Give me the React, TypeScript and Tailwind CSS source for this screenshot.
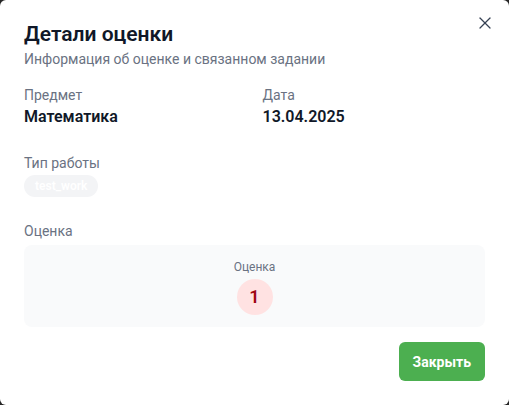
import { X } from "lucide-react";

export default function App() {
    return (
        <div className="h-[405px] w-[509px] bg-neutral-800" style={{ fontFamily: 'Roboto, "Noto Sans", sans-serif' }}>
            <div className="relative flex h-full w-full flex-col rounded-[6px] bg-white px-6 pt-5 pb-6">
                <button className="absolute right-[14px] top-[13px] text-gray-700">
                    <X size={20} strokeWidth={1.5} />
                </button>
                <h2 className="text-[21px] font-semibold leading-7 text-gray-900">Детали оценки</h2>
                <p className="mt-px text-sm leading-5 text-gray-500">Информация об оценке и связанном задании</p>

                <div className="mt-4 grid grid-cols-2 gap-4">
                    <div>
                        <div className="text-sm leading-5 text-gray-500">Предмет</div>
                        <div className="text-base font-semibold leading-6 text-gray-900">Математика</div>
                    </div>
                    <div>
                        <div className="text-sm leading-5 text-gray-500">Дата</div>
                        <div className="text-base font-semibold leading-6 text-gray-900">13.04.2025</div>
                    </div>
                </div>

                <div className="mt-6">
                    <div className="text-sm leading-5 text-gray-500">Тип работы</div>
                    <span className="mt-0.5 inline-flex h-[22px] items-center rounded-full bg-gray-100 px-[11px] text-xs font-semibold text-white">
                        test_work
                    </span>
                </div>

                <div className="mt-6">
                    <div className="text-sm leading-5 text-gray-500">Оценка</div>
                    <div className="mt-1 flex flex-col items-center rounded-lg bg-gray-50 pt-3.5 pb-3">
                        <div className="text-xs leading-4 text-gray-500">Оценка</div>
                        <div className="mt-1 flex h-9 w-9 items-center justify-center rounded-full bg-red-100 text-lg font-semibold text-red-800">
                            1
                        </div>
                    </div>
                </div>

                <div className="mt-auto flex justify-end">
                    <button className="h-[39px] rounded-md bg-[#4caf50] px-[14px] text-sm font-bold text-white">Закрыть</button>
                </div>
            </div>
        </div>
    );
}
